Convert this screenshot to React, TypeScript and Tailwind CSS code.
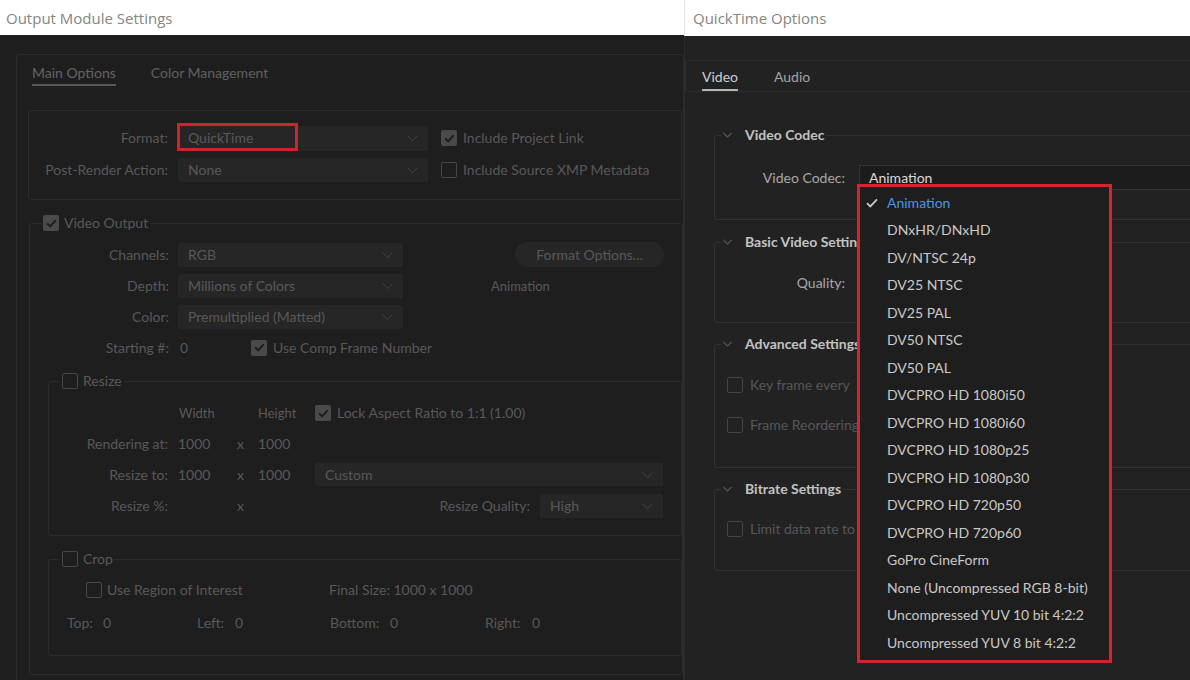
import React from 'react';

const codecs = [
  'Animation',
  'DNxHR/DNxHD',
  'DV/NTSC 24p',
  'DV25 NTSC',
  'DV25 PAL',
  'DV50 NTSC',
  'DV50 PAL',
  'DVCPRO HD 1080i50',
  'DVCPRO HD 1080i60',
  'DVCPRO HD 1080p25',
  'DVCPRO HD 1080p30',
  'DVCPRO HD 720p50',
  'DVCPRO HD 720p60',
  'GoPro CineForm',
  'None (Uncompressed RGB 8-bit)',
  'Uncompressed YUV 10 bit 4:2:2',
  'Uncompressed YUV 8 bit 4:2:2',
];

const Caret = ({ className = '' }: { className?: string }) => (
  <svg width="11" height="6" viewBox="0 0 11 6" className={className}>
    <path d="M0.5 0.5 L5.5 5.5 L10.5 0.5" fill="none" stroke="currentColor" strokeWidth="1" />
  </svg>
);

const Box = ({ checked, dim }: { checked?: boolean; dim?: boolean }) =>
  checked ? (
    <span className="w-4 h-4 rounded-[2px] bg-[#4a4a4a] flex items-center justify-center shrink-0">
      <svg width="11" height="9" viewBox="0 0 11 9">
        <path d="M1.2 4.6 L4.2 7.4 L9.8 1.2" fill="none" stroke="#1c1c1c" strokeWidth="2" />
      </svg>
    </span>
  ) : (
    <span className={`w-4 h-4 rounded-[2px] border-[1.5px] shrink-0 ${dim ? 'border-[#444]' : 'border-[#474747]'}`} />
  );

const Select = ({ value, className = '' }: { value: string; className?: string }) => (
  <div className={`flex items-center justify-between bg-[#262626] rounded-[2px] pl-[10px] pr-[10px] ${className}`}>
    <span>{value}</span>
    <Caret className="text-[#424242]" />
  </div>
);

const Legend = ({ label, checked }: { label: string; checked?: boolean }) => (
  <legend className="ml-[11px] px-[2px]">
    <div className="h-[18px] flex items-center gap-[5px]">
      <Box checked={checked} />
      <span>{label}</span>
    </div>
  </legend>
);

const Group = ({ title, children, className = '' }: { title: string; children: React.ReactNode; className?: string }) => (
  <fieldset className={`ml-[29px] -mr-[40px] border border-[#323232] rounded-[3px] ${className}`}>
    <legend className="ml-[6px] px-[2px]">
      <div className="h-[18px] flex items-center gap-[13px]">
        <Caret className="text-[#8a8a8a] w-[9px]" />
        <span className="font-bold text-[#c2c2c2]">{title}</span>
      </div>
    </legend>
    {children}
  </fieldset>
);

const OutputModule = () => (
  <div className="w-[684px] h-full flex flex-col overflow-hidden">
    <div className="h-[35px] shrink-0 bg-white flex items-center pl-[6px] text-[15px] text-[#858585] font-['Open_Sans',sans-serif]">
      Output Module Settings
    </div>
    <div className="flex-1 bg-[#1e1e1e] pt-[19px] pl-[16px] text-[14px] text-[#595959]">
      <div className="w-[668px] border border-[#2c2c2c] rounded-[4px] pb-[40px]">
        {/* tabs */}
        <div className="flex items-end pl-[15px] pt-[9px] gap-[35px]">
          <span className="pb-[2px] border-b-2 border-[#575757] text-[#646464]">Main Options</span>
          <span className="pb-[2px] border-b-2 border-transparent text-[#606060]">Color Management</span>
        </div>

        {/* format */}
        <div className="mt-[24px] ml-[11px] mr-[1px] border border-[#2c2c2c] rounded-[3px] pt-[11px] pb-[13px]">
          <div className="h-[32px] flex items-center">
            <span className="w-[139px] text-right">Format:</span>
            <div className="relative ml-[10px]">
              <Select value="QuickTime" className="w-[250px] h-[25px]" />
              <div className="absolute -left-[1px] -top-[3px] w-[121px] h-[28px] border-[3px] border-[#d3222d]" />
            </div>
            <div className="ml-[13px] flex items-center gap-[6px]">
              <Box checked />
              <span>Include Project Link</span>
            </div>
          </div>
          <div className="h-[32px] flex items-center">
            <span className="w-[139px] text-right">Post-Render Action:</span>
            <Select value="None" className="ml-[10px] w-[250px] h-[24px]" />
            <div className="ml-[13px] flex items-center gap-[6px]">
              <Box />
              <span>Include Source XMP Metadata</span>
            </div>
          </div>
        </div>

        {/* video output */}
        <fieldset className="mt-[14px] ml-[12px] border border-[#2c2c2c] rounded-[3px] pb-[18px]">
          <Legend label="Video Output" checked />
          <div className="pt-[7px]">
            <div className="h-[31px] flex items-center">
              <span className="w-[139px] text-right">Channels:</span>
              <Select value="RGB" className="ml-[9px] w-[225px] h-[24px]" />
              <div className="ml-[112px] w-[149px] h-[25px] rounded-full bg-[#262626] flex items-center justify-center">
                Format Options...
              </div>
            </div>
            <div className="h-[31px] flex items-center">
              <span className="w-[139px] text-right">Depth:</span>
              <Select value="Millions of Colors" className="ml-[9px] w-[225px] h-[24px]" />
              <span className="ml-[88px] text-[13px]">Animation</span>
            </div>
            <div className="h-[31px] flex items-center">
              <span className="w-[139px] text-right">Color:</span>
              <Select value="Premultiplied (Matted)" className="ml-[9px] w-[225px] h-[24px]" />
            </div>
            <div className="h-[31px] flex items-center">
              <span className="w-[139px] text-right">Starting #:</span>
              <span className="ml-[11px] w-[71px]">0</span>
              <Box checked />
              <span className="ml-[6px]">Use Comp Frame Number</span>
            </div>
          </div>

          {/* resize */}
          <fieldset className="mt-[9px] ml-[18px] border border-[#2c2c2c] rounded-[3px] pb-[14px]">
            <Legend label="Resize" />
            <div className="pt-[8px]">
              <div className="h-[30px] flex items-center text-[13px]">
                <span className="w-[119px]" />
                <span className="ml-[11px] w-[79px]">Width</span>
                <span className="w-[57px]">Height</span>
                <Box checked />
                <span className="ml-[6px] text-[14px]">Lock Aspect Ratio to 1:1 (1.00)</span>
              </div>
              <div className="h-[31px] flex items-center">
                <span className="w-[119px] text-right">Rendering at:</span>
                <span className="ml-[10px] w-[59px]">1000</span>
                <span className="w-[21px]">x</span>
                <span>1000</span>
              </div>
              <div className="h-[31px] flex items-center">
                <span className="w-[119px] text-right">Resize to:</span>
                <span className="ml-[10px] w-[59px]">1000</span>
                <span className="w-[21px]">x</span>
                <span className="w-[57px]">1000</span>
                <Select value="Custom" className="w-[348px] h-[23px]" />
              </div>
              <div className="h-[31px] flex items-center">
                <span className="w-[119px] text-right">Resize %:</span>
                <span className="ml-[10px] w-[59px]" />
                <span className="w-[21px]">x</span>
                <span className="w-[272px] text-right">Resize Quality:</span>
                <Select value="High" className="ml-[10px] w-[123px] h-[24px]" />
              </div>
            </div>
          </fieldset>

          {/* crop */}
          <fieldset className="mt-[14px] ml-[18px] border border-[#2c2c2c] rounded-[3px] pb-[14px]">
            <Legend label="Crop" />
            <div className="pt-[7px]">
              <div className="h-[30px] flex items-center pl-[37px]">
                <div className="w-[243px] flex items-center gap-[5px]">
                  <Box />
                  <span>Use Region of Interest</span>
                </div>
                <span>Final Size: 1000 x 1000</span>
              </div>
              <div className="h-[36px] flex items-center pl-[18px]">
                <span className="w-[36px]">Top:</span>
                <span className="w-[94px]">0</span>
                <span className="w-[38px]">Left:</span>
                <span className="w-[95px]">0</span>
                <span className="w-[60px]">Bottom:</span>
                <span className="w-[95px]">0</span>
                <span className="w-[47px]">Right:</span>
                <span>0</span>
              </div>
            </div>
          </fieldset>
        </fieldset>
      </div>
    </div>
  </div>
);

const QuickTimeOptions = () => (
  <div className="flex-1 h-full flex flex-col overflow-hidden">
    <div className="h-[36px] shrink-0 bg-white border-l border-[#e4e4e4] flex items-center pl-[8px] text-[15px] text-[#858585] font-['Open_Sans',sans-serif]">
      QuickTime Options
    </div>
    <div className="flex-1 bg-[#222222] border-l border-[#2c2c2c] pt-[24px] text-[14px] text-[#a8a8a8]">
      {/* tabs */}
      <div className="h-[32px] border-y border-l border-[#2e2e2e] rounded-l-[3px] flex items-end pl-[16px] gap-[36px]">
        <span className="pb-[3px] border-b-2 border-[#b5b5b5] text-[#d0d0d0]">Video</span>
        <span className="pb-[3px] border-b-2 border-transparent text-[#a4a4a4]">Audio</span>
      </div>

      <Group title="Video Codec" className="mt-[34px] pb-[29px]">
        <div className="pt-[21px] flex items-center">
          <span className="w-[130px] text-right">Video Codec:</span>
          <div className="relative ml-[14px] flex-1 h-[25px] bg-[#1c1c1c] border border-[#353535] pl-[9px] flex items-center text-[#dadada]">
            Animation
            <div className="absolute -left-[3px] top-[18px] w-[255px] h-[479px] border-[3px] border-[#d7232d] bg-[#1e1e1e] z-10 pt-[2px]">
              {codecs.map((c, i) => (
                <div key={c} className="h-[27.5px] flex items-center">
                  <span className="w-[27px] pl-[6px] shrink-0">
                    {i === 0 && (
                      <svg width="12" height="10" viewBox="0 0 12 10">
                        <path d="M1 5.2 L4.3 8.4 L11 1.4" fill="none" stroke="#c9c9c9" strokeWidth="1.8" />
                      </svg>
                    )}
                  </span>
                  <span className={i === 0 ? 'text-[#4f95e6]' : 'text-[#c9c9c9]'}>{c}</span>
                </div>
              ))}
            </div>
          </div>
        </div>
      </Group>

      <Group title="Basic Video Settings" className="mt-[13px] pb-[27px]">
        <div className="pt-[20px] h-[44px] flex items-center">
          <span className="w-[130px] text-right">Quality:</span>
        </div>
      </Group>

      <Group title="Advanced Settings" className="mt-[12px] pb-[30px]">
        <div className="pt-[20px] pl-[12px] flex flex-col gap-[16px] text-[#575757]">
          <div className="h-[24px] flex items-center gap-[7px]">
            <Box dim />
            <span>Key frame every</span>
          </div>
          <div className="h-[24px] flex items-center gap-[7px]">
            <Box dim />
            <span>Frame Reordering</span>
          </div>
        </div>
      </Group>

      <Group title="Bitrate Settings" className="mt-[12px] pb-[29px]">
        <div className="pt-[19px] pl-[12px] text-[#575757]">
          <div className="h-[24px] flex items-center gap-[7px]">
            <Box dim />
            <span>Limit data rate to</span>
          </div>
        </div>
      </Group>
    </div>
  </div>
);

export default function App() {
  return (
    <div className="w-[1190px] h-[680px] flex overflow-hidden bg-[#1e1e1e] leading-[18px] font-['Lato',sans-serif]">
      <OutputModule />
      <QuickTimeOptions />
    </div>
  );
}
